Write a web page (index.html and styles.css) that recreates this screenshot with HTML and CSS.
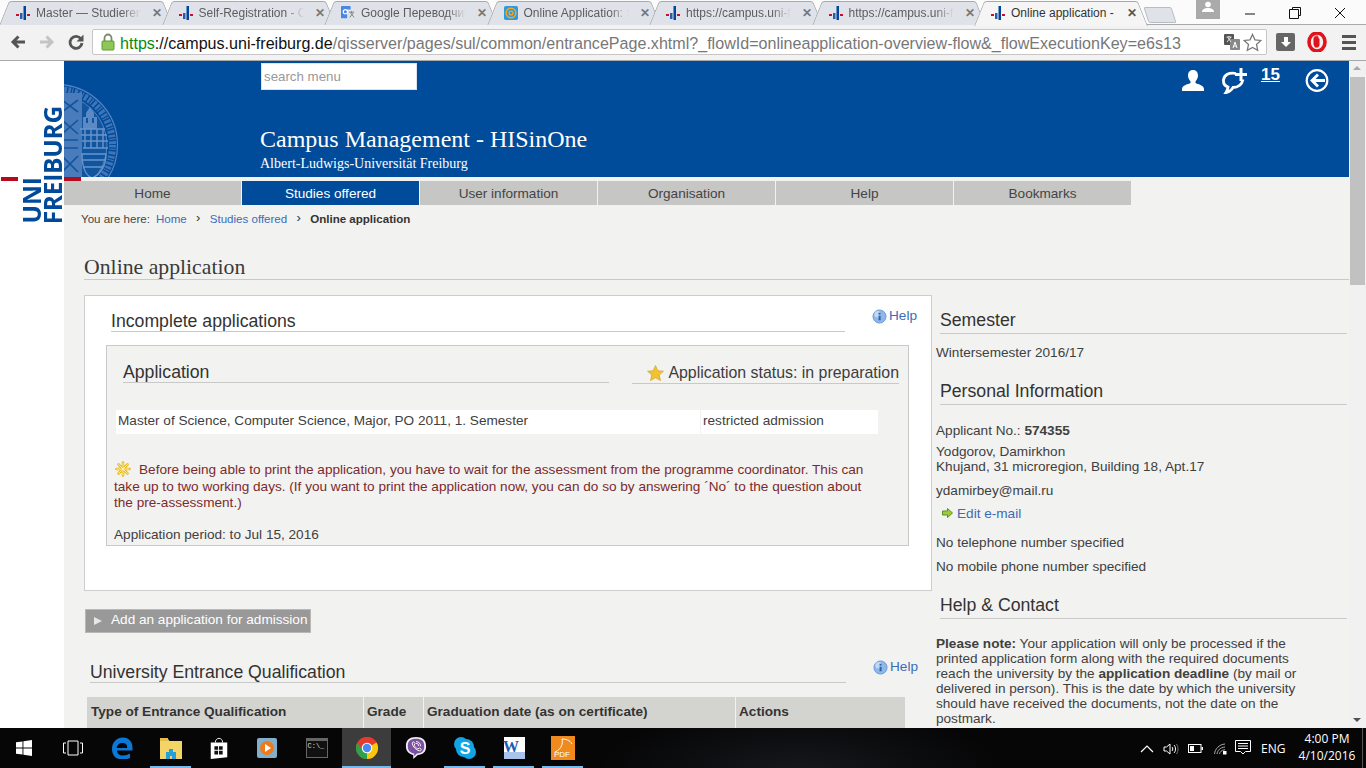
FILE: index.html
```html
<!DOCTYPE html>
<html lang="en">
<head>
<meta charset="utf-8">
<title>Online application</title>
<link rel="stylesheet" href="styles.css">
</head>
<body>
<svg class="defs" width="0" height="0" aria-hidden="true">
  <symbol id="his" viewBox="0 0 14 16">
    <rect x="0" y="9" width="3" height="2" fill="#c8102e"/><rect x="4" y="8" width="2.5" height="6" fill="#2a5caa"/><rect x="7.5" y="1" width="2.5" height="14" fill="#00479b"/><rect x="11" y="9" width="3" height="2" fill="#c8102e"/>
  </symbol>
  <symbol id="info" viewBox="0 0 16 16">
    <circle cx="8" cy="8" r="7" fill="#8db8e8" stroke="#6d9bd6"/><circle cx="6" cy="5.5" r="3.5" fill="#d5e6f8" opacity=".7"/><rect x="7" y="7" width="2.2" height="5" fill="#2f62a8"/><rect x="7" y="4" width="2.2" height="2" fill="#2f62a8"/>
  </symbol>
</svg>
<div class="window">
  <div class="tabstrip">
    <div class="tab"><svg class="fav"><use href="#his"/></svg><span class="tabtitle">Master — Studierend</span><span class="tabx">✕</span></div>
    <div class="tab"><svg class="fav"><use href="#his"/></svg><span class="tabtitle">Self-Registration - C</span><span class="tabx">✕</span></div>
    <div class="tab"><svg class="fav" viewBox="0 0 16 16"><rect x="0" y="0" width="11" height="14" rx="1" fill="#4a86e8"/><rect x="7" y="4" width="9" height="12" fill="#dfe3e9"/><path d="M9 7h6M12 6v2M10 13l4-5M11 8l4 5" stroke="#777" fill="none"/><circle cx="5" cy="6.5" r="2.4" fill="none" stroke="#fff" stroke-width="1.3"/></svg><span class="tabtitle">Google Переводчик</span><span class="tabx">✕</span></div>
    <div class="tab"><svg class="fav" viewBox="0 0 16 16"><rect width="16" height="16" rx="2" fill="#2b9be0"/><circle cx="8" cy="8" r="5.5" fill="none" stroke="#f6a623" stroke-width="1.8"/><circle cx="8" cy="8" r="2.2" fill="none" stroke="#f6a623" stroke-width="1.5"/></svg><span class="tabtitle">Online Application: S</span><span class="tabx">✕</span></div>
    <div class="tab"><svg class="fav"><use href="#his"/></svg><span class="tabtitle">https://campus.uni-f</span><span class="tabx">✕</span></div>
    <div class="tab"><svg class="fav"><use href="#his"/></svg><span class="tabtitle">https://campus.uni-f</span><span class="tabx">✕</span></div>
    <div class="tab active"><svg class="fav"><use href="#his"/></svg><span class="tabtitle">Online application -</span><span class="tabx">✕</span></div>
    <div class="newtab"></div>
    <div class="profile"><svg width="12" height="12" viewBox="0 0 12 12"><circle cx="6" cy="3.5" r="2.8" fill="#fff"/><path d="M0 11c0-3 3-4 6-4s6 1 6 4z" fill="#fff"/></svg></div>
    <div class="winctl">
      <svg width="12" height="12" viewBox="0 0 12 12"><path d="M1 7h10" stroke="#111"/></svg>
      <svg width="12" height="12" viewBox="0 0 12 12"><path d="M3.5 2.5V.5h8v8h-2M.5 2.5h9v9h-9z" fill="none" stroke="#111"/></svg>
      <svg width="12" height="12" viewBox="0 0 12 12"><path d="M1 1l10 10M11 1L1 11" stroke="#111"/></svg>
    </div>
  </div>
  <div class="toolbar">
    <svg class="navicon" viewBox="0 0 18 18"><path d="M16 9H5M9.5 3.5L4 9l5.5 5.5" fill="none" stroke="#555" stroke-width="3"/></svg>
    <svg class="navicon" viewBox="0 0 18 18"><path d="M2 9h11M8.5 3.5L14 9l-5.500 5.500" fill="none" stroke="#c4c4c4" stroke-width="3"/></svg>
    <svg class="navicon" viewBox="0 0 18 18"><path d="M14 6A6 6 0 1 0 15 10" fill="none" stroke="#555" stroke-width="2.800"/><path d="M16.500 1.500v7h-7z" fill="#555"/></svg>
    <div class="urlbar">
      <svg class="lock" viewBox="0 0 14 18"><path d="M3.500 8V5a3.500 3.500 0 0 1 7 0v3" fill="none" stroke="#7d8a6a" stroke-width="1.800"/><rect x="1" y="8" width="12" height="9" rx="1" fill="#8fc658" stroke="#5f9a33"/></svg>
      <span class="url"><span class="scheme">https</span><span class="dark">://campus.uni-freiburg.de</span>/qisserver/pages/sul/common/entrancePage.xhtml?_flowId=onlineapplication-overview-flow&amp;_flowExecutionKey=e6s13</span>
      <svg class="trans" viewBox="0 0 16 16"><rect x="0" y="0" width="10" height="11" rx="1" fill="#555"/><rect x="6" y="5" width="10" height="11" rx="1" fill="#888"/><path d="M2.500 3h5M5 2v1M3 8l4-5M3.500 3l3.500 5" stroke="#fff" fill="none" stroke-width=".8"/><path d="M9 14l2-6 2 6M10 12h2" stroke="#fff" fill="none"/></svg>
      <svg class="star" viewBox="0 0 20 20"><path d="M10 1.500l2.600 5.700 6.200.7-4.600 4.200 1.300 6.100L10 15.200l-5.500 3 1.300-6.100L1.200 7.900l6.200-.7z" fill="#fff" stroke="#777" stroke-width="1.300"/></svg>
    </div>
    <div class="dlbtn"><svg width="12" height="12" viewBox="0 0 12 12"><path d="M4 1h4v5h3L6 11 1 6h3z" fill="#fff"/></svg></div>
    <svg class="opera" viewBox="0 0 20 20"><ellipse cx="10" cy="10" rx="8" ry="9" fill="none" stroke="#e0121b" stroke-width="3.600"/><path d="M6.500 8v-2.500h1v-2h1v1h1v-1.500h1v1.500h1v2h1v7l-1.500 2h-3l-1.500-3z" fill="#e0121b"/></svg>
    <div class="menu"><i></i><i></i><i></i></div>
  </div>
  <div class="viewport">
    <aside class="brand">
      <div class="logo"><span class="logo-uni">UNI</span><span class="logo-fr">FREIBURG</span></div>
      <i class="redbar left"></i><i class="redbar right"></i>
    </aside>
    <div class="page">
      <header class="masthead">
        <svg class="seal" viewBox="0 0 130 130" width="130" height="130">
          <circle cx="65" cy="65" r="50" fill="#11559f"/>
          <g fill="none" stroke="#5483c0">
            <circle cx="65" cy="65" r="60.500" stroke-width="1.200"/>
            <circle cx="65" cy="65" r="50" stroke-width="1"/>
            <circle cx="65" cy="65" r="55.500" stroke-width="7" stroke-dasharray="2.500 1.200 1.200 1.500 3 1.500" opacity=".75"/>
          </g>
          <path d="M68 13h22v86H68z" fill="#4a7cbc"/>
          <g fill="none" stroke="#11559f" stroke-width="1.600">
            <path d="M70 20l16 12M86 20L70 32M70 40l16 14M86 40L70 54M72 60h14M72 68h14M70 76l16 16M86 76L70 92"/>
          </g>
          <path d="M91 49V37h3v-4l4-6 4 6v4h3v12z" fill="#5d8ac4"/>
          <path d="M94 38h2v5h-2zM100 38h2v5h-2z" fill="#11559f"/>
          <g fill="none" stroke="#6a95cc" stroke-width="1.400">
            <path d="M88 49h25M89 55h26M90 61h26M91 68h25M93 49v19M99 49v19M105 49v19M111 49v19"/>
            <path d="M90 74h24c0 14-8 22-14 24-5-2-10-8-10-24zM90 80h23M92 87h19"/>
          </g>
        </svg>
        <div class="searchbox">search menu</div>
        <div class="headicons">
          <svg class="ico-person" viewBox="0 0 22 21"><path d="M11 0c3.500 0 5 2.500 5 5.500 0 2.500-1.200 4.500-2.500 5.800v1.700c2 1.200 8.500 2 8.500 6V21H0v-2c0-4 6.500-4.800 8.500-6v-1.700C7.200 10 6 8 6 5.500 6 2.500 7.500 0 11 0z" fill="#fff"/></svg>
          <svg class="ico-comment" viewBox="0 0 25 26"><path d="M14 5.500C7 4 2 7 1.500 12c-.3 3.500 1.500 6 4.500 7-.2 2-1 4-2 5.500 3-.5 5.500-2.500 7-5 5 0 9-3 10-8" fill="none" stroke="#fff" stroke-width="2.800"/><path d="M17.500 0h3v5h4.500v3h-4.500v5h-3V8H13V5h4.500z" fill="#fff"/></svg>
          <a class="count">15</a>
          <svg class="ico-back" viewBox="0 0 24 23"><circle cx="12" cy="11.500" r="10.300" fill="none" stroke="#fff" stroke-width="2.200"/><path d="M20 11.500H9M13 5.500l-6 6 6 6" fill="none" stroke="#fff" stroke-width="2.800"/></svg>
        </div>
        <div class="sitename">
          <div class="sitetitle">Campus Management - HISinOne</div>
          <div class="sitesub">Albert-Ludwigs-Universität Freiburg</div>
        </div>
      </header>
      <nav class="mainnav">
        <a class="navitem">Home</a>
        <a class="navitem current">Studies offered</a>
        <a class="navitem">User information</a>
        <a class="navitem">Organisation</a>
        <a class="navitem">Help</a>
        <a class="navitem">Bookmarks</a>
      </nav>
      <div class="crumbs">
        <span class="crumbhere">You are here:</span>
        <a class="link">Home</a><span class="sep">›</span>
        <a class="link">Studies offered</a><span class="sep">›</span>
        <strong>Online application</strong>
      </div>
      <h1 class="pagetitle">Online application</h1>
      <div class="columns">
        <main class="maincol">
          <section class="panel">
            <div class="headrow">
              <h2 class="h-panel">Incomplete applications</h2>
              <a class="help"><svg class="infoicon"><use href="#info"/></svg>Help</a>
            </div>
            <div class="appbox">
              <div class="apphead">
                <h3 class="h-app">Application</h3>
                <h3 class="h-status"><svg class="staricon" viewBox="0 0 18 17"><path d="M9 .5l2.500 5.500 6 .6-4.500 4 1.300 6L9 13.500 3.700 16.600l1.300-6-4.500-4 6-.6z" fill="#f2c230" stroke="#c99a1a" stroke-width=".6"/></svg>Application status: in preparation</h3>
              </div>
              <div class="appline">
                <div class="appcell">Master of Science, Computer Science, Major, PO 2011, 1. Semester</div>
                <div class="appcell">restricted admission</div>
              </div>
              <p class="notice"><svg class="noticeicon" viewBox="0 0 16 16"><path d="M8 1.500v13M1.500 8h13M3.500 3.500l9 9M12.500 3.500l-9 9" stroke="#e8b820" stroke-width="2.600" stroke-linecap="round"/><path d="M8 2v12M2 8h12M3.500 3.500l9 9M12.500 3.500l-9 9" stroke="#fdf0a8" stroke-width="1" stroke-linecap="round"/></svg>Before being able to print the application, you have to wait for the assessment from the programme coordinator. This can take up to two working days. (If you want to print the application now, you can do so by answering ´No´ to the question about the pre-assessment.)</p>
              <p class="period">Application period: to Jul 15, 2016</p>
            </div>
          </section>
          <a class="addbtn"><i class="tri"></i><span class="addlabel">Add an application for admission</span></a>
          <div class="headrow second">
            <h2 class="h-entrance">University Entrance Qualification</h2>
            <a class="help"><svg class="infoicon"><use href="#info"/></svg>Help</a>
          </div>
          <div class="qualtable">
            <div class="th">Type of Entrance Qualification</div>
            <div class="th">Grade</div>
            <div class="th">Graduation date (as on certificate)</div>
            <div class="th">Actions</div>
          </div>
        </main>
        <aside class="sidecol">
          <h3 class="h-side first">Semester</h3>
          <p class="s-sem">Wintersemester 2016/17</p>
          <h3 class="h-side">Personal Information</h3>
          <p class="s-app">Applicant No.: <strong>574355</strong></p>
          <p class="s-name">Yodgorov, Damirkhon<br>Khujand, 31 microregion, Building 18, Apt.17</p>
          <p class="s-mail">ydamirbey@mail.ru</p>
          <a class="s-edit"><svg class="arrowicon" viewBox="0 0 11 10"><path d="M.5 3h5V.5L10.500 5l-5 4.500V7h-5z" fill="#9ccc3c" stroke="#5e8f1e"/></svg><span class="link">Edit e-mail</span></a>
          <p class="s-tel">No telephone number specified</p>
          <p class="s-mob">No mobile phone number specified</p>
          <h3 class="h-side">Help &amp; Contact</h3>
          <p class="s-note"><strong>Please note:</strong> Your application will only be processed if the printed application form along with the required documents reach the university by the <strong>application deadline</strong> (by mail or delivered in person). This is the date by which the university should have received the documents, not the date on the postmark.</p>
        </aside>
      </div>
    </div>
    <div class="scrollbar">
      <i class="arrow up"></i>
      <i class="thumb"></i>
      <i class="arrow down"></i>
    </div>
  </div>
  <footer class="taskbar">
    <div class="slot"><svg class="tb16" viewBox="0 0 16 16"><path d="M0 2.300l6.500-.9v6.200H0zM7.400 1.300L16 0v7.600H7.400zM0 8.400h6.500v6.200L0 13.700zM7.400 8.400H16V16l-8.600-1.200z" fill="#fff"/></svg></div>
    <div class="slot"><svg class="tbview" viewBox="0 0 20 16"><path d="M5 1h10v14H5zM3 3H.5v10H3M17 3h2.500v10H17" fill="none" stroke="#fff"/></svg></div>
    <div class="slot"><svg class="tb22" viewBox="0 0 22 22"><path d="M11 6c-3 0-5 2-5.300 5h10.500c0-4-1.500-5-5.200-5zM1 12C1 5 6 .5 12 .5c6 0 9.500 4.500 9.500 10v3H6c.2 3.500 2.500 5 6 5 2.500 0 5-.7 7-2v4.500c-2 1-4.500 1.500-7.500 1.500C5 22.500 1 18.500 1 12z" fill="#0a78d7"/></svg></div>
    <div class="slot run"><svg class="tb22" viewBox="0 0 22 22"><path d="M0 2h8l1.500 2H22v18H0z" fill="#f3d467"/><rect x="0" y="1" width="8" height="3" fill="#e8bd4a"/><path d="M6 22v-7h3v-3h4v3h3v7h-4v-3h-2v3z" fill="#26a0da"/></svg></div>
    <div class="slot"><svg class="tb22" viewBox="0 0 22 24"><path d="M7 6c0-6 8-6 8 0" fill="none" stroke="#fff"/><path d="M2 6h18v16l-18 2z" fill="#fff"/><path d="M6 10h4v4H6zM11 10h4v4h-4zM6 15h4v4H6zM11 15h4v4h-4z" fill="#111"/></svg></div>
    <div class="slot"><svg class="tb22" viewBox="0 0 22 22"><rect x="1" y="1" width="20" height="20" rx="2" fill="#7fb0cf"/><circle cx="11" cy="11" r="7" fill="#ee7a1c"/><path d="M9 7l6 4-6 4z" fill="#fff"/></svg></div>
    <div class="slot"><div class="cmd">C:\_</div></div>
    <div class="slot run active"><svg class="tb22" viewBox="0 0 22 22"><circle cx="11" cy="11" r="11" fill="#e33b2e"/><path d="M11 11L1.470 5.500A11 11 0 0 0 11 22z" fill="#2fa14a"/><path d="M11 11v11A11 11 0 0 0 20.530 5.500z" fill="#f9c70b"/><path d="M11 5.500h9.530A11 11 0 0 0 1.470 5.500L6 13z" fill="#e33b2e"/><circle cx="11" cy="11" r="5.300" fill="#fff"/><circle cx="11" cy="11" r="4.200" fill="#4a8af0"/></svg></div>
    <div class="slot"><svg class="tb22" viewBox="0 0 22 24"><path d="M11 0c7 0 11 3 11 10 0 7-4 9-9 9.500L8 24v-4.500C3 18.500 0 15 0 10 0 3 4 0 11 0z" fill="#f2eef7"/><path d="M11 2c6 0 9 2.500 9 8s-3 7.500-8 8l-3 3v-3C4 17 2 14 2 10c0-5.500 3-8 9-8z" fill="#7a519e"/><path d="M7 6c1-1 2-1 3 1l-1 2c1 2 2 3 4 4l2-1c2 1 2 2 1 3-3 1-10-5-9-9zM11 5c3 0 5 2 5 5M11 7c2 0 3 1 3 3" fill="none" stroke="#fff"/></svg></div>
    <div class="slot run"><svg class="tb22" viewBox="0 0 22 22"><circle cx="7" cy="7" r="7" fill="#12a5e6"/><circle cx="15" cy="15" r="7" fill="#12a5e6"/><rect x="2" y="2" width="18" height="18" rx="8" fill="#12a5e6"/><text x="11" y="17" class="skype">S</text></svg></div>
    <div class="slot run"><svg class="tb22" viewBox="0 0 22 22"><rect x="1" y="0" width="21" height="22" fill="#fff"/><rect x="1" y="15" width="21" height="7" fill="#a9c4ea"/><text x="0" y="15" class="wordw">W</text></svg></div>
    <div class="slot run"><svg class="tb24" viewBox="0 0 24 24"><rect width="24" height="24" fill="#f08a1d"/><path d="M4 16c7-3 8-9 7-13 3 0 8 1 10 5" fill="none" stroke="#fff"/><text x="3" y="21" class="pdf">PDF</text></svg></div>
    <div class="tray">
      <svg class="tr-chev" viewBox="0 0 14 8"><path d="M1 7l6-6 6 6" fill="none" stroke="#fff" stroke-width="1.200"/></svg>
      <svg class="tr-vol" viewBox="0 0 16 12"><path d="M1 4h2.500L7 1v10L3.500 8H1z" fill="none" stroke="#fff"/><path d="M9 4c1 1 1 3 0 4M11 2c2 2 2 6 0 8" fill="none" stroke="#fff"/><path d="M13.500 1c2 3 2 7 0 10" fill="none" stroke="#777"/></svg>
      <svg class="tr-bat" viewBox="0 0 15 9"><rect x=".5" y=".5" width="12.500" height="8" fill="none" stroke="#fff"/><rect x="2" y="2" width="4" height="5" fill="#fff"/><rect x="13.500" y="3" width="1.500" height="3" fill="#fff"/></svg>
      <svg class="tr-wifi" viewBox="0 0 13 12"><path d="M.5 11C1 6 5 1.500 11 1M3 11c.5-3.500 3-6.500 8-7M5.500 11c.3-2 2-4 5.500-4.300" fill="none" stroke="#aaa"/><rect x="9" y="8" width="3.500" height="3.500" fill="#fff"/></svg>
      <svg class="tr-note" viewBox="0 0 16 16"><path d="M.5.500h15v11h-5L8 14l-2.500-2.500h-5zM3 3.500h10M3 6h10M3 8.500h10" fill="none" stroke="#fff"/></svg>
      <span class="tr-lang">ENG</span>
      <div class="clock"><span>4:00 PM</span><span>4/10/2016</span></div>
      <i class="showdesk"></i>
    </div>
  </footer>
</div>
</body>
</html>
```
FILE: styles.css
```css
* { box-sizing: border-box; }
html, body { margin: 0; padding: 0; height: 100%; overflow: hidden; }
body { font-family: "Liberation Sans", Arial, sans-serif; font-size: 13.6px; color: #404040; background: #f2f2f0; }
.defs { position: absolute; }
h1, h2, h3, p { margin: 0; font-weight: normal; }
i { display: block; }

.window { display: flex; flex-direction: column; width: 1366px; height: 768px; }

/* Tab strip */
.tabstrip { display: flex; align-items: flex-start; height: 25px; background: #fbfbfc; border-bottom: 1px solid #a8a9ab; position: relative; padding-top: 1px; }
.tab { position: relative; flex: none; width: 172px; height: 24px; margin-right: -9.5px; display: flex; align-items: center; padding-left: 16px; font-size: 12px; color: #5c5c5c; z-index: 1; }
.tab::before, .tab::after { content: ""; position: absolute; top: 0; bottom: 0; width: 50%; background: #dfe3e9; border-top: 1px solid #a8a9ab; z-index: -1; }
.tab::before { left: 4px; border-left: 1px solid #a8a9ab; border-radius: 3px 0 0 0; transform: skewX(-22deg); }
.tab::after { right: 4px; border-right: 1px solid #a8a9ab; border-radius: 0 3px 0 0; transform: skewX(22deg); }
.tab.active { color: #333; z-index: 2; }
.tab.active::before, .tab.active::after { background: #f5f5f5; bottom: -1px; }
.fav { flex: none; width: 14px; height: 16px; margin-right: 6px; }
.tabtitle { flex: none; width: 105px; white-space: nowrap; overflow: hidden; -webkit-mask-image: linear-gradient(90deg, #000 82%, transparent); mask-image: linear-gradient(90deg, #000 82%, transparent); }
.active .tabtitle { -webkit-mask-image: none; mask-image: none; }
.tabx { flex: none; width: 12px; margin-left: 10px; font-size: 12px; font-weight: bold; color: #777; text-align: center; line-height: 12px; }
.active .tabx { color: #555; }
.newtab { flex: none; width: 28px; height: 16px; margin: 6px 0 0 8px; background: #dfe3e9; border: 1px solid #b9bcc1; border-radius: 2px; transform: skewX(18deg); }
.profile { position: absolute; left: 1196px; top: 0; width: 24px; height: 19px; background: #aaa; display: flex; justify-content: center; padding-top: 1px; }
.winctl { position: absolute; left: 1244px; top: 7px; display: flex; gap: 33px; }

/* Toolbar */
.toolbar { display: flex; align-items: center; height: 35px; background: #f2f2f2; padding: 0 9px 1px 9px; flex: none; }
.navicon { flex: none; width: 18px; height: 18px; margin-right: 11px; }
.navicon:nth-child(3) { margin-right: 10px; }
.urlbar { flex: none; display: flex; align-items: center; width: 1175px; height: 26px; margin-left: -3px; background: #fff; border: 1px solid #c6c6c6; border-radius: 2px; padding-left: 8px; }
.lock { flex: none; width: 14px; height: 18px; margin-right: 5px; }
.url { flex: none; width: 1099px; font-size: 16.09px; line-height: 20px; padding-top: 1px; color: #777; white-space: nowrap; }
.scheme { color: #0b8a0b; }
.dark { color: #111; }
.trans { flex: none; width: 16px; height: 16px; margin-left: 5px; }
.star { flex: none; width: 19px; height: 19px; margin-left: 3px; }
.dlbtn { flex: none; width: 19px; height: 18px; margin-left: 9px; background: #666; border-radius: 2px; display: flex; align-items: center; justify-content: center; }
.opera { flex: none; width: 20px; height: 20px; margin-left: 12px; }
.menu { flex: none; width: 14px; margin-left: 15px; display: flex; flex-direction: column; gap: 3px; }
.menu i { height: 3px; background: #555; }

/* Viewport */
.viewport { flex: none; height: 668px; display: flex; border-top: 1px solid #a9a9a9; overflow: hidden; }
.brand { flex: none; width: 64px; background: #fff; position: relative; z-index: 2; }
.logo { position: absolute; left: 21px; top: 48px; width: 43px; height: 115px; display: flex; align-items: flex-end; font-family: "Open Sans", sans-serif; font-weight: 700; color: #004a99; font-size: 24.5px; line-height: 21px; }
.logo span { display: block; flex: none; width: 21px; writing-mode: vertical-rl; transform: rotate(180deg); white-space: nowrap; }
.logo-fr { letter-spacing: -.25px; margin-left: 0; }
.redbar { position: absolute; top: 116px; height: 4px; background: #b5091e; }
.redbar.left { left: 1px; width: 17px; }
.redbar.right { left: 64px; width: 17px; }

.page { flex: none; width: 1285px; height: 667px; overflow: hidden; }
.masthead { position: relative; height: 116px; background: #004b9a; overflow: hidden; padding-left: 197px; color: #fff; }
.seal { position: absolute; left: -72px; top: 19px; }
.searchbox { width: 156px; height: 27px; margin-top: 2px; background: #fff; border: 1px solid #dde3ee; color: #999; font-size: 13.3px; line-height: 25px; padding-left: 2px; }
.headicons { position: absolute; left: 1118px; top: 8px; display: flex; align-items: flex-start; }
.ico-person { flex: none; width: 22px; height: 21px; margin-top: 1px; }
.ico-comment { flex: none; width: 25px; height: 26px; margin-left: 18px; margin-top: -1px; }
.count { flex: none; margin-left: 14px; font-size: 17px; font-weight: bold; line-height: 17px; text-decoration: underline; color: #fff; margin-top: -3px; }
.ico-back { flex: none; width: 24px; height: 23px; margin-left: 25px; }
.sitename { font-family: "Liberation Serif", "Times New Roman", serif; margin-top: 35px; margin-left: -1px; }
.sitetitle { font-size: 24px; line-height: 28px; }
.sitesub { font-size: 14px; line-height: 18px; margin-top: 2px; }

.mainnav { display: flex; gap: 1px; margin-top: 4px; height: 24px; width: 1067px; }
.navitem { flex: none; width: 177px; height: 24px; background: #c6c6c4; text-align: center; line-height: 26px; color: #444; }
.navitem.current { background: #004b9a; color: #fff; }

.crumbs { display: flex; align-items: center; height: 16px; margin: 6px 0 0 17px; font-size: 11.56px; color: #444; }
.crumbhere { margin-right: 6px; }
.link { color: #3a6cb8; }
.sep { width: 23px; text-align: center; font-size: 13px; margin-top: -4px; color: #333; }
.crumbs strong { color: #333; }

.pagetitle { margin: 30px 0 0 20px; height: 23px; font-family: "Liberation Serif", serif; font-size: 21.76px; line-height: 20px; color: #3a3a3a; border-bottom: 1px solid #c9c9c9; }

.columns { display: flex; gap: 4px; margin: 15px 0 0 20px; }
.maincol { flex: none; width: 848px; }
.sidecol { flex: none; width: 411px; }

/* Main panel */
.panel { height: 296px; background: #fff; border: 1px solid #cdcdcd; }
.headrow { display: flex; align-items: flex-start; gap: 27px; padding: 12px 0 0 26px; }
.h-panel { width: 734px; margin-top: 1px; padding-top: 2px; font-size: 17.68px; line-height: 20px; border-bottom: 1px solid #c9c9c9; color: #333; }
.help { display: flex; align-items: center; line-height: 16px; color: #3a6cb8; }
.infoicon { flex: none; width: 15px; height: 15px; margin-right: 2px; }
.appbox { width: 803px; height: 201px; margin: 13px 0 0 21px; background: #f2f2f0; border: 1px solid #c9c9c9; }
.apphead { display: flex; gap: 23px; padding: 15px 0 0 16px; }
.h-app { width: 486px; height: 21px; margin-top: 1px; font-size: 17.68px; line-height: 20px; color: #333; border-bottom: 1px solid #c9c9c9; }
.h-status { width: 267px; height: 23px; display: flex; align-items: center; justify-content: flex-end; font-size: 15.9px; line-height: 20px; color: #3d3d3d; border-bottom: 1px solid #c9c9c9; padding-top: 1px; }
.staricon { flex: none; width: 17px; height: 16px; margin-right: 4px; }
.appline { display: flex; gap: 1px; width: 762px; height: 24px; margin: 26px 0 0 9px; }
.appcell { background: #fff; line-height: 21px; padding-left: 2px; }
.appcell:first-child { width: 584px; }
.appcell:last-child { width: 177px; }
.notice { width: 752px; margin: 27px 0 0 7px; line-height: 16.5px; color: #7b2a2e; }
.noticeicon { width: 16px; height: 16px; margin: 0 8px 0 1px; vertical-align: -3px; }
.period { margin: 15px 0 0 7px; line-height: 16px; }

.addbtn { display: flex; align-items: center; height: 24px; width: 226px; margin: 18px 0 0 1px; background: #999; border: 1px solid #b8b8b8; color: #fff; white-space: nowrap; }
.addlabel { line-height: 16px; margin-top: -2px; }
.tri { flex: none; width: 0; height: 0; margin: 0 9px 0 8px; border-left: 8px solid #e8e8e8; border-top: 4px solid transparent; border-bottom: 4px solid transparent; }

.headrow.second { padding: 26px 0 0 6px; }
.h-entrance { width: 756px; margin-top: 1px; padding-top: 2px; font-size: 17.68px; line-height: 20px; border-bottom: 1px solid #c9c9c9; color: #333; }
.qualtable { display: grid; grid-template-columns: 276px 59px 311px 169px; gap: 1px; width: 818px; margin: 14px 0 0 3px; }
.th { height: 40px; background: #d3d3cf; font-weight: bold; padding: 7px 3px; line-height: 16px; color: #333; }
.th:first-child { padding-left: 4px; }

/* Sidebar */
.h-side { margin: 19px 0 0 4px; height: 25px; font-size: 17.68px; line-height: 22px; color: #333; border-bottom: 1px solid #c9c9c9; }
.h-side.first { margin-top: 14px; }
.sidecol p { line-height: 16px; }
.sidecol .s-sem { margin-top: 11px; }
.sidecol .s-app { margin-top: 18px; }
.sidecol .s-name { margin-top: 5px; line-height: 15px; }
.sidecol .s-mail { margin-top: 9px; }
.s-edit { display: flex; align-items: center; height: 16px; margin: 6px 0 0 6px; }
.arrowicon { flex: none; width: 11px; height: 10px; margin-right: 4px; }
.sidecol .s-tel { margin-top: 14px; }
.sidecol .s-mob { margin-top: 8px; }
.sidecol .s-note { margin-top: 17px; line-height: 15px; width: 370px; }

/* Scrollbar */
.scrollbar { flex: none; width: 17px; height: 667px; background: #f1f1f1; position: relative; }
.thumb { position: absolute; left: 1px; top: 16px; width: 15px; height: 208px; background: #c1c1c1; }
.arrow { position: absolute; left: 4px; width: 0; height: 0; border-left: 4px solid transparent; border-right: 4px solid transparent; }
.arrow.up { top: 5px; border-bottom: 4px solid #a8a8a8; }
.arrow.down { bottom: 6px; border-top: 4px solid #505050; }

/* Taskbar */
.taskbar { flex: none; display: flex; height: 40px; background: radial-gradient(ellipse 200px 60px at 800px 40px, #15171a, #060607); color: #fff; position: relative; }
.slot { position: relative; flex: none; width: 49px; height: 40px; display: flex; align-items: center; justify-content: center; }
.slot:nth-child(1), .slot:nth-child(2) { width: 48.5px; }
.slot:nth-child(5), .slot:nth-child(6) { margin-left: -1px; }
.slot:nth-child(7), .slot:nth-child(8) { margin-left: 1px; }
.slot.active { background: #3c3c3c; }
.slot.run::after { content: ""; position: absolute; left: 4px; right: 4px; bottom: 0; height: 2px; background: #76b9ed; }
.slot.active::after { left: 0; right: 0; }
.tb16 { width: 16px; height: 16px; }
.tbview { width: 20px; height: 16px; }
.tb22 { width: 22px; height: 22px; }
.tb24 { width: 24px; height: 24px; }
.cmd { width: 22px; height: 20px; background: #111; border: 1px solid #666; border-top-width: 3px; font-family: "Liberation Mono", monospace; font-size: 7px; line-height: 10px; color: #ddd; padding-left: 1px; white-space: nowrap; overflow: hidden; }
.skype { font-family: "Liberation Sans", sans-serif; font-size: 16px; font-weight: bold; fill: #fff; text-anchor: middle; }
.wordw { font-family: "Liberation Serif", serif; font-size: 16px; font-weight: bold; fill: #1f5bb5; }
.pdf { font-family: "Liberation Sans", sans-serif; font-size: 8px; fill: #fff; }
.tray { position: absolute; left: 1140px; right: 0; top: 0; height: 40px; }
.tr-chev { position: absolute; left: 0; top: 17px; width: 14px; height: 8px; }
.tr-vol { position: absolute; left: 23px; top: 15px; width: 16px; height: 12px; }
.tr-bat { position: absolute; left: 48px; top: 16px; width: 15px; height: 9px; }
.tr-wifi { position: absolute; left: 74px; top: 15px; width: 13px; height: 12px; }
.tr-note { position: absolute; left: 95px; top: 12px; width: 16px; height: 16px; }
.tr-lang { position: absolute; left: 121px; top: 13px; font-family: "Open Sans", sans-serif; font-size: 12px; line-height: 16px; }
.clock { position: absolute; left: 155px; width: 64px; top: 2px; display: flex; flex-direction: column; align-items: center; font-family: "Open Sans", sans-serif; font-size: 12px; line-height: 17px; }
.showdesk { position: absolute; left: 222px; top: 0; width: 1px; height: 40px; background: #555; }
```
